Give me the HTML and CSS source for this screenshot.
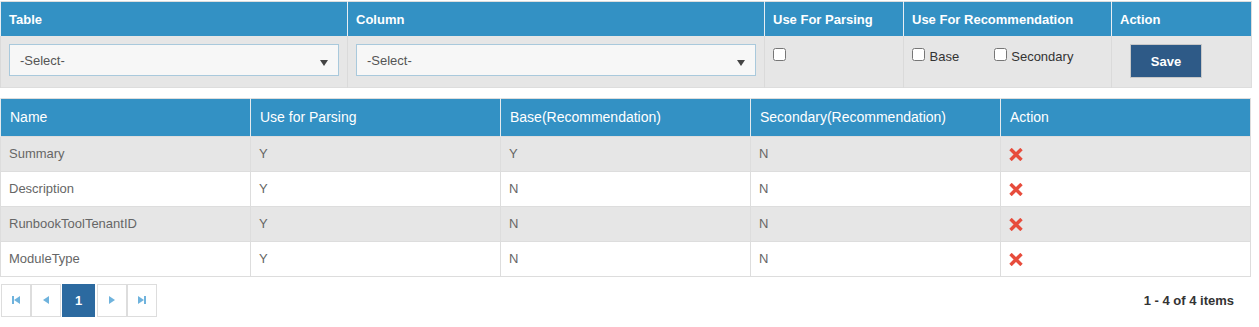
FILE: index.html
```html
<!DOCTYPE html>
<html>
<head>
    <title>Field Mapping</title>
    <link rel="stylesheet" href="styles.css">
</head>
<body>
    <table class="mapForm">
        <colgroup>
            <col style="width: 347px">
            <col style="width: 417px">
            <col style="width: 139px">
            <col style="width: 208px">
            <col style="width: 140px">
        </colgroup>
        <thead>
            <tr>
                <th>Table</th>
                <th>Column</th>
                <th>Use For Parsing</th>
                <th>Use For Recommendation</th>
                <th>Action</th>
            </tr>
        </thead>
        <tbody>
            <tr>
                <td>
                    <div class="selectBox">
                        <span>-Select-</span>
                        <span class="caret"></span>
                    </div>
                </td>
                <td>
                    <div class="selectBox">
                        <span>-Select-</span>
                        <span class="caret"></span>
                    </div>
                </td>
                <td><input type="checkbox" class="chk"></td>
                <td class="recCell">
                    <label class="chkLabel base"><input type="checkbox" class="chk"> Base</label>
                    <label class="chkLabel"><input type="checkbox" class="chk"> Secondary</label>
                </td>
                <td><button class="saveBtn">Save</button></td>
            </tr>
        </tbody>
    </table>

    <table class="grid">
        <thead>
            <tr>
                <th>Name</th>
                <th>Use for Parsing</th>
                <th>Base(Recommendation)</th>
                <th>Secondary(Recommendation)</th>
                <th>Action</th>
            </tr>
        </thead>
        <tbody>
            <tr class="alt">
                <td>Summary</td><td>Y</td><td>Y</td><td>N</td>
                <td><svg class="del" width="14" height="13" viewBox="0 0 14 13"><path d="M1.5 1 L12.5 12 M12.5 1 L1.5 12" stroke="#e74c3c" stroke-width="3.4"/></svg></td>
            </tr>
            <tr>
                <td>Description</td><td>Y</td><td>N</td><td>N</td>
                <td><svg class="del" width="14" height="13" viewBox="0 0 14 13"><path d="M1.5 1 L12.5 12 M12.5 1 L1.5 12" stroke="#e74c3c" stroke-width="3.4"/></svg></td>
            </tr>
            <tr class="alt">
                <td>RunbookToolTenantID</td><td>Y</td><td>N</td><td>N</td>
                <td><svg class="del" width="14" height="13" viewBox="0 0 14 13"><path d="M1.5 1 L12.5 12 M12.5 1 L1.5 12" stroke="#e74c3c" stroke-width="3.4"/></svg></td>
            </tr>
            <tr>
                <td>ModuleType</td><td>Y</td><td>N</td><td>N</td>
                <td><svg class="del" width="14" height="13" viewBox="0 0 14 13"><path d="M1.5 1 L12.5 12 M12.5 1 L1.5 12" stroke="#e74c3c" stroke-width="3.4"/></svg></td>
            </tr>
        </tbody>
    </table>

    <div class="pager">
        <div class="pageLinks">
            <a class="pageBtn"><svg width="8" height="8" viewBox="0 0 8 8"><rect x="0" y="0" width="2" height="8" fill="#6fb3dd"/><path d="M8 0 L2 4 L8 8 Z" fill="#6fb3dd"/></svg></a>
            <a class="pageBtn"><svg width="6" height="8" viewBox="0 0 6 8"><path d="M6 0 L0 4 L6 8 Z" fill="#6fb3dd"/></svg></a>
            <a class="pageBtn active">1</a>
            <a class="pageBtn next"><svg width="6" height="8" viewBox="0 0 6 8"><path d="M0 0 L6 4 L0 8 Z" fill="#6fb3dd"/></svg></a>
            <a class="pageBtn"><svg width="8" height="8" viewBox="0 0 8 8"><path d="M0 0 L6 4 L0 8 Z" fill="#6fb3dd"/><rect x="6" y="0" width="2" height="8" fill="#6fb3dd"/></svg></a>
        </div>
        <span class="pageInfo">1 - 4 of 4 items</span>
    </div>
</body>
</html>
```

FILE: styles.css
```css
body {
    font-family: Arial, "Liberation Sans", sans-serif;
    font-size: 13px;
    color: #333;
    background-color: #fff;
    margin: 0;
    padding: 1px 0 0 0;
}

table {
    border-collapse: collapse;
    table-layout: fixed;
    width: 1251px;
}

.mapForm {
    border: 1px solid #ddd;
}

.mapForm th {
    background-color: #3391c4;
    color: #fff;
    font-weight: bold;
    font-size: 13px;
    text-align: left;
    height: 34px;
    padding: 0 8px;
    border-left: 1px solid #e8eef3;
}

.mapForm td {
    background-color: #e6e6e6;
    vertical-align: top;
    height: 51px;
    padding: 8px 8px 0 8px;
    border-left: 1px solid #dadada;
    box-sizing: border-box;
}

.selectBox {
    display: flex;
    justify-content: space-between;
    align-items: center;
    height: 32px;
    padding: 0 10px 0 10px;
    border: 1px solid #a9c9dc;
    background-color: #f7f7f7;
    color: #555;
    font-size: 13px;
    box-sizing: border-box;
}

.caret {
    width: 0;
    height: 0;
    margin-top: 6px;
    border-left: 4px solid transparent;
    border-right: 4px solid transparent;
    border-top: 6px solid #444;
}

.chk {
    width: 13px;
    height: 13px;
    margin: 4px 0 0 0;
    vertical-align: top;
}

.recCell {
    white-space: nowrap;
}

.chkLabel {
    display: inline-block;
    color: #333;
    line-height: 26px;
}

.chkLabel.base {
    width: 78px;
}

.chkLabel .chk {
    margin-top: 4px;
    margin-right: 1px;
}

.saveBtn {
    margin-left: 10px;
    width: 72px;
    height: 34px;
    background-color: #2e5a87;
    color: #fff;
    font-family: Arial, "Liberation Sans", sans-serif;
    font-weight: bold;
    font-size: 13px;
    border: 1px solid #c8c8c8;
    padding: 0;
}

.grid {
    margin-top: 10px;
    border: 1px solid #ddd;
}

.grid th {
    background-color: #3391c4;
    color: #fff;
    font-weight: normal;
    font-size: 14px;
    text-align: left;
    height: 38px;
    padding: 0 9px;
    border-left: 1px solid #e4eaee;
    box-sizing: border-box;
}

.grid td {
    height: 34px;
    padding: 0 8px;
    color: #666;
    border: 1px solid #ddd;
    background-color: #fff;
}

.grid tr.alt td {
    background-color: #e6e6e6;
}

.del {
    display: block;
    margin-top: 2px;
}

.pager {
    display: flex;
    justify-content: space-between;
    align-items: center;
    width: 1251px;
    margin-top: 7px;
}

.pageLinks {
    display: flex;
    padding-left: 1px;
}

.pageBtn {
    display: flex;
    align-items: center;
    justify-content: center;
    width: 28px;
    height: 31px;
    border: 1px solid #ddd;
}

.pageBtn.active {
    width: 33px;
    height: 33px;
    border: none;
    margin: 0 2px 0 1px;
    background-color: #2c6aa0;
    color: #fff;
    font-weight: bold;
    font-size: 13px;
}

.pageInfo {
    font-weight: bold;
    color: #333;
    margin-right: 17px;
}
```
